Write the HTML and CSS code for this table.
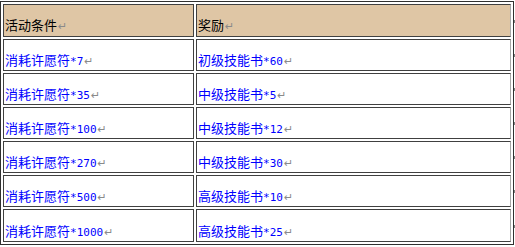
FILE: index.html
```html
<!DOCTYPE html>
<html lang="zh">
<head>
<meta charset="utf-8">
<link rel="stylesheet" href="styles.css">
</head>
<body>
<table class="rewards">
  <tr class="head">
    <td class="c1">活动条件<span class="pm">↵</span></td>
    <td class="c2">奖励<span class="pm">↵</span><i class="rowmark"></i></td>
  </tr>
  <tr>
    <td class="c1">消耗许愿符<span class="num">*7</span><span class="pm">↵</span></td>
    <td class="c2">初级技能书<span class="num">*60</span><span class="pm">↵</span><i class="rowmark"></i></td>
  </tr>
  <tr>
    <td class="c1">消耗许愿符<span class="num">*35</span><span class="pm">↵</span></td>
    <td class="c2">中级技能书<span class="num">*5</span><span class="pm">↵</span><i class="rowmark"></i></td>
  </tr>
  <tr>
    <td class="c1">消耗许愿符<span class="num">*100</span><span class="pm">↵</span></td>
    <td class="c2">中级技能书<span class="num">*12</span><span class="pm">↵</span><i class="rowmark"></i></td>
  </tr>
  <tr>
    <td class="c1">消耗许愿符<span class="num">*270</span><span class="pm">↵</span></td>
    <td class="c2">中级技能书<span class="num">*30</span><span class="pm">↵</span><i class="rowmark"></i></td>
  </tr>
  <tr>
    <td class="c1">消耗许愿符<span class="num">*500</span><span class="pm">↵</span></td>
    <td class="c2">高级技能书<span class="num">*10</span><span class="pm">↵</span><i class="rowmark"></i></td>
  </tr>
  <tr class="last">
    <td class="c1">消耗许愿符<span class="num">*1000</span><span class="pm">↵</span></td>
    <td class="c2">高级技能书<span class="num">*25</span><span class="pm">↵</span><i class="rowmark"></i></td>
  </tr>
</table>
</body>
</html>
```
FILE: styles.css
```css
html, body {
  margin: 0;
  padding: 0;
  background: #ffffff;
}
body {
  padding-top: 1px;
  font-family: "Noto Sans CJK SC", "Noto Sans", sans-serif;
  font-size: 13px;
}
.rewards {
  width: 514px;
  border: 1px solid #303030;
  border-collapse: separate;
  border-spacing: 2px;
  table-layout: fixed;
}
.rewards td {
  height: 30px;
  padding: 0 0 1px 1px;
  box-sizing: border-box;
  vertical-align: bottom;
  line-height: 15px;
  color: #0000ff;
  border: 1px solid #404040;
  white-space: nowrap;
}
.rewards td.c1 {
  width: 191px;
}
.rewards td.c2 {
  position: relative;
  border-right-color: #a8a8a8;
  padding-left: 1px;
}
.rewards tr td {
  height: 32px;
}
.rewards tr.head td,
.rewards tr.last td {
  height: 33px;
}
.rewards tr.head td {
  background: #dfc6a5;
  color: #000000;
  padding-bottom: 2px;
}
.num {
  font-family: "DejaVu Sans Mono", monospace;
  font-size: 11px;
}
.pm {
  color: #8a8a8a;
  font-size: 11px;
  margin-left: 1px;
  font-family: "DejaVu Sans", sans-serif;
}
.rowmark {
  position: absolute;
  right: -6px;
  top: 50%;
  width: 2px;
  height: 1px;
  background: #808080;
}
.rowmark::after {
  content: "";
  position: absolute;
  left: 0;
  top: -1px;
  width: 1px;
  height: 3px;
  background: #808080;
}
```
